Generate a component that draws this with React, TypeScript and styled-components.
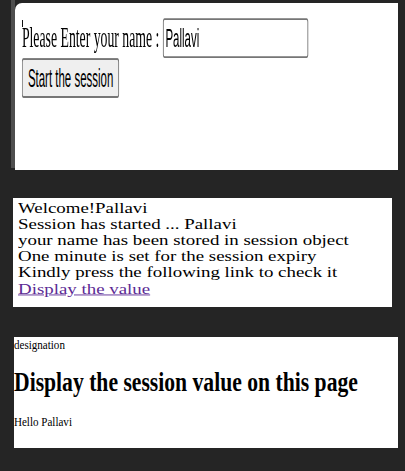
import React from "react";
import styled, { createGlobalStyle } from "styled-components";

const Global = createGlobalStyle`
  html, body {
    margin: 0;
    padding: 0;
    background: #252525;
    width: 405px;
    height: 471px;
    overflow: hidden;
  }
  #root {
    width: 405px;
    height: 471px;
  }
`;

const Page = styled.div`
  display: flex;
  flex-direction: column;
  width: 405px;
  height: 471px;
  background: #252525;
`;

const TopRow = styled.div`
  display: flex;
  align-items: flex-start;
  padding: 0 7px 0 11px;
`;

const FrameBar = styled.div`
  width: 4px;
  height: 168px;
  background: #4e4e4e;
  flex: none;
`;

const FormPanel = styled.div`
  position: relative;
  flex: 1;
  height: 167px;
  margin-top: 3px;
  background: #ffffff;
  border-top-left-radius: 7px;
  overflow: hidden;

  &::before {
    content: "";
    position: absolute;
    left: 7px;
    top: 17px;
    width: 1px;
    height: 7px;
    background: #111;
  }
`;

const Form = styled.div`
  padding: 8px;
  transform: scale(0.86, 1.9);
  transform-origin: 0 0;
  font-family: "Liberation Serif", "Times New Roman", serif;
  font-size: 16px;
  color: #000;
  white-space: nowrap;
`;

const Line = styled.div`
  display: block;
`;

const NameInput = styled.input`
  box-sizing: border-box;
  width: 169px;
  height: 21px;
  padding: 1px 2px;
  border: 1px solid #767676;
  border-radius: 2px;
  font-family: "Liberation Sans", Arial, sans-serif;
  font-size: 13.333px;
  color: #000;
  background: #fff;
  outline: none;
`;

const StartButton = styled.button`
  box-sizing: border-box;
  height: 21px;
  padding: 1px 6px;
  border: 1px solid #767676;
  border-radius: 2px;
  background: #efefef;
  font-family: "Liberation Sans", Arial, sans-serif;
  font-size: 13.333px;
  color: #000;
`;

const InfoPanel = styled.div`
  margin: 28px 0 0 13px;
  width: 379px;
  height: 109px;
  background: #ffffff;
  padding: 2px 0 0 5px;
  box-sizing: border-box;
  overflow: hidden;
`;

const InfoText = styled.div`
  transform: scale(1.18, 0.9);
  transform-origin: 0 0;
  font-family: "Liberation Serif", "Times New Roman", serif;
  font-size: 16px;
  color: #000;
  white-space: nowrap;
`;

const InfoLine = styled.div``;

const ValueLink = styled.a`
  color: #5b2a94;
  text-decoration: underline;
`;

const ResultPanel = styled.div`
  margin: 30px 0 0 14px;
  width: 384px;
  height: 111px;
  background: #ffffff;
  overflow: hidden;
`;

const ResultContent = styled.div`
  transform: scale(0.69, 0.83);
  transform-origin: 0 0;
  font-family: "Liberation Serif", "Times New Roman", serif;
  font-size: 16px;
  color: #000;
  white-space: nowrap;
`;

const Designation = styled.div``;

const Heading = styled.h1`
  font-size: 32px;
  font-weight: bold;
  margin: 18px 0 20px;
  transform: scaleX(0.98);
  transform-origin: 0 0;
`;

const Greeting = styled.p`
  margin: 16px 0;
`;

export default function App() {
  return (
    <Page>
      <Global />
      <TopRow>
        <FrameBar />
        <FormPanel>
          <Form>
            <Line>
              Please Enter your name : <NameInput defaultValue="Pallavi" />
            </Line>
            <StartButton type="button">Start the session</StartButton>
          </Form>
        </FormPanel>
      </TopRow>
      <InfoPanel>
        <InfoText>
          <InfoLine>Welcome!Pallavi</InfoLine>
          <InfoLine>Session has started ... Pallavi</InfoLine>
          <InfoLine>your name has been stored in session object</InfoLine>
          <InfoLine>One minute is set for the session expiry</InfoLine>
          <InfoLine>Kindly press the following link to check it</InfoLine>
          <InfoLine>
            <ValueLink href="#">Display the value</ValueLink>
          </InfoLine>
        </InfoText>
      </InfoPanel>
      <ResultPanel>
        <ResultContent>
          <Designation>designation</Designation>
          <Heading>Display the session value on this page</Heading>
          <Greeting>Hello Pallavi</Greeting>
        </ResultContent>
      </ResultPanel>
    </Page>
  );
}
